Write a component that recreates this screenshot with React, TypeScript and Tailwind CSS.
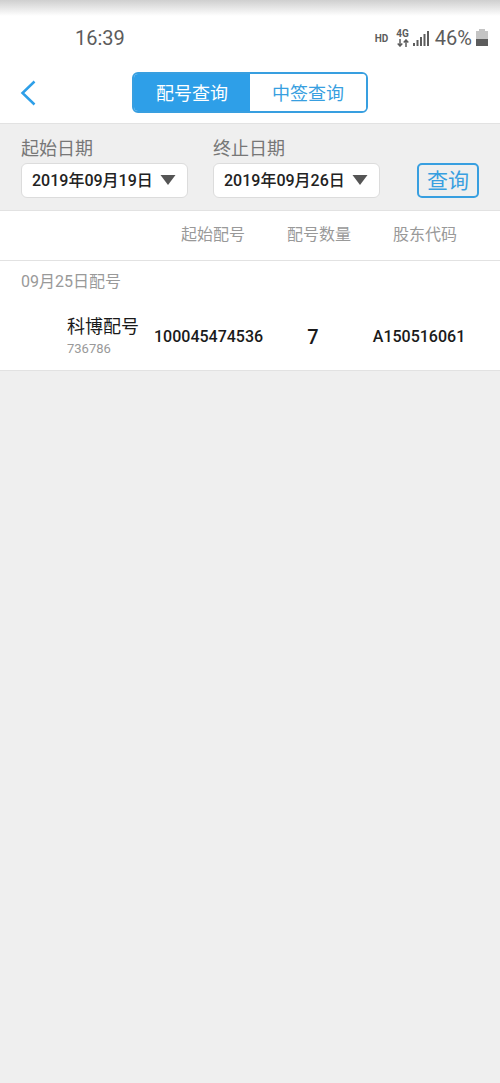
import { useState } from "react";
import clsx from "clsx";

interface Allotment {
  name: string;
  code: string;
  startNumber: string;
  quantity: number;
  account: string;
}

interface DateSelectProps {
  id: string;
  label: string;
  value: string;
  options: string[];
  onChange: (value: string) => void;
}

const tabs = ["配号查询", "中签查询"];
const columns = ["起始配号", "配号数量", "股东代码"];
const dates = ["2019年09月19日", "2019年09月26日"];

const allotments: Allotment[] = [
  {
    name: "科博配号",
    code: "736786",
    startNumber: "100045474536",
    quantity: 7,
    account: "A150516061",
  },
];

function StatusBar() {
  return (
    <div className="flex h-16 items-center justify-between bg-linear-to-b from-[#cfcfcf] via-white via-25% to-white pt-3 pr-3 pl-[75px] text-[#5c5c5c]">
      <span className="text-xl">16:39</span>
      <div className="flex items-center">
        <span className="mr-2 text-[10px] font-bold">HD</span>
        <div className="flex flex-col items-center">
          <span className="text-[10px] leading-[10px] font-bold">4G</span>
          <svg className="h-2 w-3" viewBox="0 0 12 8" fill="none" stroke="currentColor" strokeWidth="1.5">
            <path d="M3 0v7M0.7 4.5 3 7l2.3-2.5M9 8V1M6.7 3.5 9 1l2.3 2.5" />
          </svg>
        </div>
        <svg className="ml-1 h-4 w-4" viewBox="0 0 16 16" fill="currentColor">
          <path d="M0 13h2v3H0zM3.5 10h2v6h-2zM7 7h2v9H7zM10.5 4h2v12h-2zM14 1h2v15h-2z" />
        </svg>
        <span className="ml-1.5 text-xl">46%</span>
        <svg className="ml-1 h-[18px] w-3" viewBox="0 0 12 18">
          <path d="M3 0h6v2h3v8H0V2h3z" fill="#c4c4c4" />
          <path d="M0 10h12v7H0z" fill="#5c5c5c" />
        </svg>
      </div>
    </div>
  );
}

function DateSelect({ id, label, value, options, onChange }: DateSelectProps) {
  return (
    <div className="w-[167px]">
      <label htmlFor={id} className="block text-lg leading-7 text-[#777]">
        {label}
      </label>
      <div className="relative">
        <select
          id={id}
          value={value}
          onChange={(e) => onChange(e.target.value)}
          className="block h-[35px] w-full appearance-none rounded-md border border-[#dcdcdc] bg-white pl-2.5 text-base font-medium text-[#222]"
        >
          {options.map((option) => (
            <option key={option}>{option}</option>
          ))}
        </select>
        <svg
          className="pointer-events-none absolute top-3 right-3 h-2.5 w-4"
          viewBox="0 0 16 10"
          fill="#555"
        >
          <path d="M0.5 0h15L8 10z" />
        </svg>
      </div>
    </div>
  );
}

export default function App() {
  const [activeTab, setActiveTab] = useState(tabs[0]);
  const [start, setStart] = useState(dates[0]);
  const [end, setEnd] = useState(dates[1]);

  return (
    <div className="min-h-screen bg-[#efefef] font-['Roboto','Noto_Sans_CJK_SC',sans-serif]">
      <StatusBar />
      <header className="relative flex h-[60px] justify-center border-b border-[#e2e2e2] bg-white pt-2">
        <button type="button" aria-label="返回" className="absolute top-4 left-5">
          <svg className="h-[26px] w-4" viewBox="0 0 16 26" fill="none" stroke="#2e9fe8" strokeWidth="2.5">
            <path d="M14.5 1.5 2.5 13l12 11.5" />
          </svg>
        </button>
        <div className="flex h-[41px] w-[236px] overflow-hidden rounded-md border-2 border-[#389fe0]">
          {tabs.map((tab) => (
            <button
              key={tab}
              type="button"
              onClick={() => setActiveTab(tab)}
              className={clsx(
                "flex-1 pt-0.5 text-lg",
                tab === activeTab ? "bg-[#2e9fe8] text-white" : "bg-white text-[#389fe0]",
              )}
            >
              {tab}
            </button>
          ))}
        </div>
      </header>

      <form
        onSubmit={(e) => e.preventDefault()}
        className="flex h-[87px] items-end justify-between border-b border-[#e2e2e2] px-[21px] pb-3"
      >
        <div className="flex gap-[25px]">
          <DateSelect id="start" label="起始日期" value={start} options={dates} onChange={setStart} />
          <DateSelect id="end" label="终止日期" value={end} options={dates} onChange={setEnd} />
        </div>
        <button
          type="submit"
          className="h-[35px] w-[62px] rounded-[5px] border-2 border-[#389fe0] pt-0.5 text-[21px] leading-none text-[#389fe0]"
        >
          查询
        </button>
      </form>

      <div className="border-b border-[#e2e2e2] bg-white">
        <table className="w-full table-fixed whitespace-nowrap">
          <thead>
            <tr className="h-[49px] border-b border-[#e2e2e2] text-base text-[#999]">
              <td />
              {columns.map((column) => (
                <th key={column} scope="col" className="w-[106px] pl-3 font-normal">
                  {column}
                </th>
              ))}
              <td className="w-7" />
            </tr>
          </thead>
          <tbody>
            <tr className="h-[43px] text-base text-[#999]">
              <th colSpan={5} scope="colgroup" className="pl-[21px] text-left font-normal">
                09月25日配号
              </th>
            </tr>
            {allotments.map((item) => (
              <tr key={item.code} className="h-[67px] text-center text-base font-medium text-[#1a1a1a]">
                <th scope="row" className="pl-[67px] text-left font-normal">
                  <div className="text-lg leading-6">{item.name}</div>
                  <div className="text-[13px] leading-5 text-[#999]">{item.code}</div>
                </th>
                <td>{item.startNumber}</td>
                <td className="text-xl">{item.quantity}</td>
                <td>{item.account}</td>
                <td />
              </tr>
            ))}
          </tbody>
        </table>
      </div>
    </div>
  );
}
